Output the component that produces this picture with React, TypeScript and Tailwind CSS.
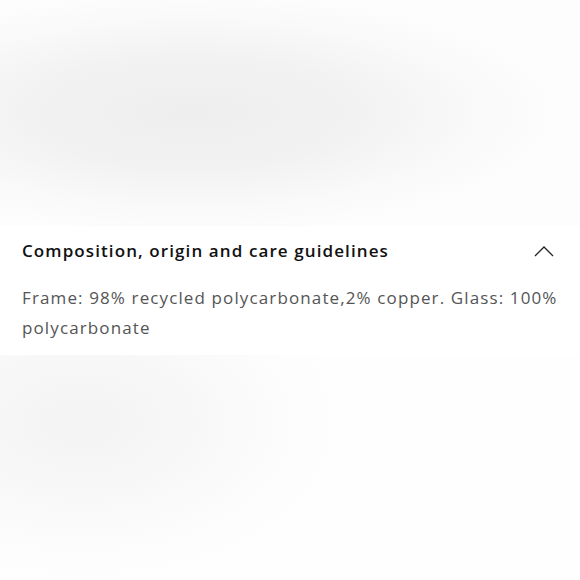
export default function App() {
  return (
    <div className="w-[580px] h-[580px] flex flex-col bg-white font-['Open_Sans',sans-serif]">
      {/* blurred product image above */}
      <div className="h-[226px] bg-[radial-gradient(ellipse_65%_55%_at_33%_50%,#eeeeef_0%,#f2f2f2_45%,#f9f9f9_75%,#fdfdfd_100%)]" />

      {/* accordion item */}
      <div className="bg-white px-[22px] pt-[14px] pb-[12px]">
        <div className="flex items-center justify-between h-[22px]">
          <h3 className="text-[17px] font-semibold text-[#111] tracking-[1.1px]">
            Composition, origin and care guidelines
          </h3>
          <svg width="22" height="14" viewBox="0 0 22 14" className="mr-[3px]">
            <path d="M2 12 L11 3 L20 12" fill="none" stroke="#222" strokeWidth="1.3" />
          </svg>
        </div>
        <p className="mt-[21px] text-[17px] leading-[30px] text-[#555] tracking-[1.12px]">
          Frame: 98% recycled polycarbonate,2% copper. Glass: 100% polycarbonate
        </p>
      </div>

      {/* blurred image below */}
      <div className="flex-1 bg-[radial-gradient(ellipse_45%_70%_at_14%_30%,#f3f3f3_0%,#f7f7f7_40%,#fbfbfb_70%,#fefefe_100%)]" />
    </div>
  );
}
